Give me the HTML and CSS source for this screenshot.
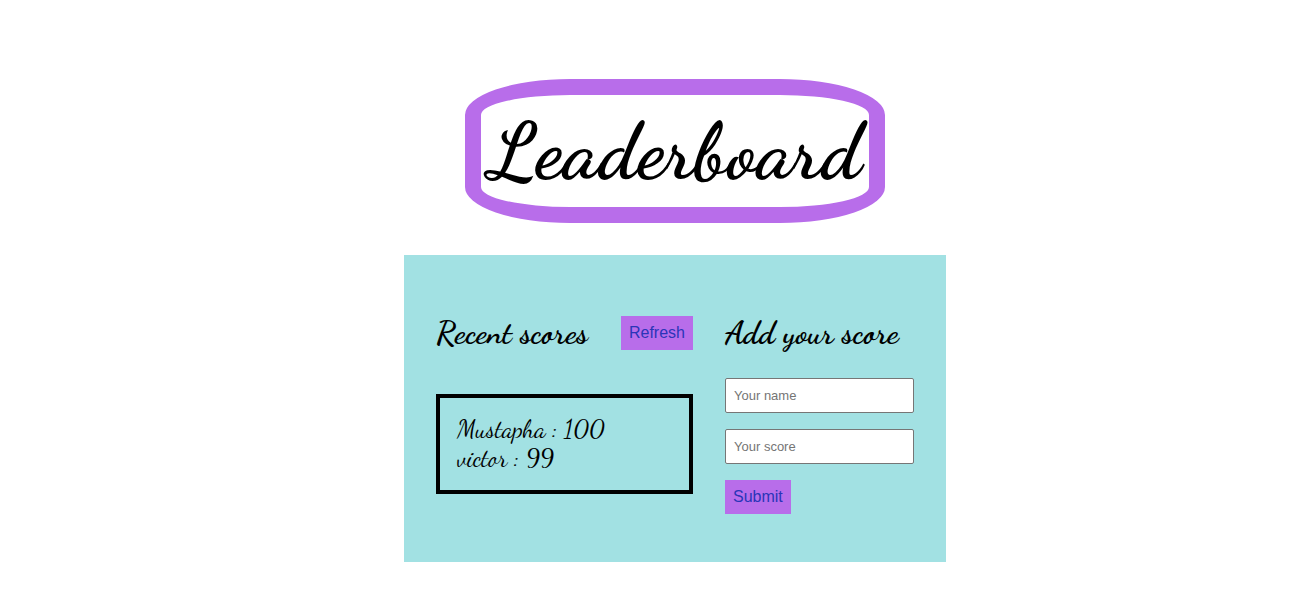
FILE: index.html
```html
<!DOCTYPE html>
<html lang="en">
<head>
  <meta charset="utf-8">
  <meta name="viewport" content="width=device-width, initial-scale=1">
  <title>Leaderboard</title>
  <link rel="stylesheet" href="styles.css">
</head>
<body>
  <main class="page">
    <h1 class="title">Leaderboard</h1>
    <div class="panel">
      <section class="recent">
        <div class="recent-header">
          <h2 class="heading">Recent scores</h2>
          <button class="button" type="button">Refresh</button>
        </div>
        <ul class="scores">
          <li>Mustapha : 100</li>
          <li>victor : 99</li>
        </ul>
      </section>
      <section class="add">
        <h2 class="heading">Add your score</h2>
        <form class="form">
          <input class="field" type="text" placeholder="Your name" aria-label="Your name">
          <input class="field" type="text" placeholder="Your score" aria-label="Your score">
          <button class="button" type="submit">Submit</button>
        </form>
      </section>
    </div>
  </main>
</body>
</html>
```

FILE: styles.css
```css
* {
  box-sizing: border-box;
}

body {
  margin: 0;
  background: #fff;
  color: #000;
  font-family: "Dancing Script", "Liberation Serif", cursive;
}

.page {
  display: flex;
  flex-direction: column;
  align-items: center;
  gap: 32px;
  padding: 79px 0 40px 44px;
}

.title {
  width: 420px;
  max-width: 100%;
  margin: 0;
  padding: 8px 0;
  border: 16px solid #b86dea;
  border-radius: 25%;
  font-size: 80px;
  font-weight: 700;
  line-height: 96px;
  text-align: center;
}

.panel {
  display: grid;
  grid-template-columns: minmax(0, 1fr) 189px;
  gap: 32px;
  width: 100%;
  max-width: 542px;
  padding: 58px 32px 48px;
  background: #a2e1e3;
}

.recent-header {
  display: flex;
  align-items: center;
  justify-content: space-between;
}

.heading {
  margin: 0;
  font-size: 32px;
  font-weight: 700;
  line-height: 40px;
}

.scores {
  margin: 41px 0 0;
  padding: 17px;
  border: 4px solid #000;
  list-style: none;
  font-size: 25px;
  line-height: 29px;
}

.form {
  display: flex;
  flex-direction: column;
  align-items: flex-start;
  gap: 16px;
  margin-top: 25px;
}

.field {
  width: 100%;
  height: 35px;
  padding: 8px;
  border: 1px solid #767676;
  border-radius: 2px;
  background: #fff;
  font: 13px "Liberation Sans", Arial, sans-serif;
}

.field::placeholder {
  color: #757575;
}

.button {
  padding: 8px;
  border: 0;
  background: #b86dea;
  color: #2a35b8;
  font: 16px/18px "Liberation Sans", Arial, sans-serif;
}
```
